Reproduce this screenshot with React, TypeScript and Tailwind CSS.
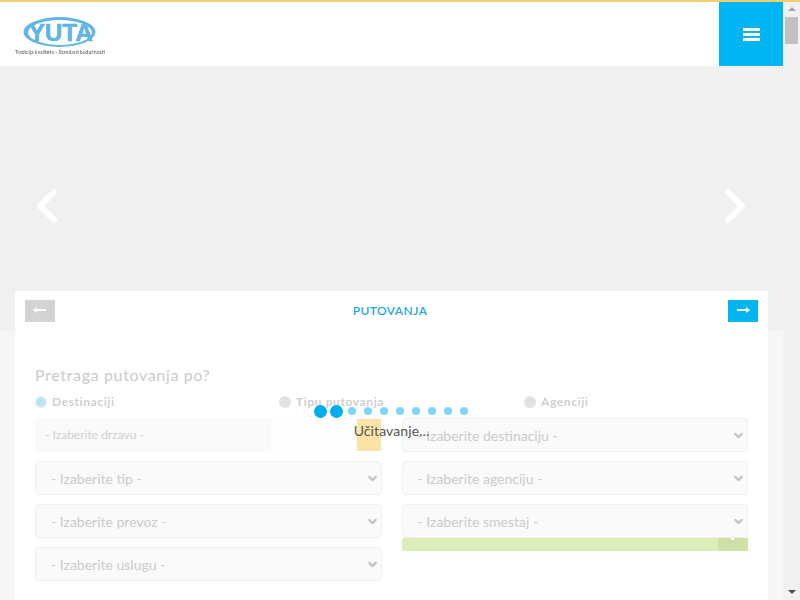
import { ChevronDown } from 'lucide-react';

const leftSelects = ['- Izaberite tip -', '- Izaberite prevoz -', '- Izaberite uslugu -'];

function FakeSelect({ label }: { label: string }) {
  return (
    <div className="h-[34px] flex items-center justify-between pl-[15px] pr-[2px] bg-[#fafafa] border border-[#f0f0f0] rounded-[4px] text-[14px] text-[#cbcbcb]">
      <span>{label}</span>
      <ChevronDown size={13} strokeWidth={4} className="text-[#c4c4c4]" />
    </div>
  );
}

function Radio({ label, active }: { label: string; active?: boolean }) {
  return (
    <div className="flex items-center gap-[5px] text-[12px] font-bold tracking-[0.6px] text-[#cfcfcf]">
      <span className={`w-[12px] h-[12px] rounded-full ${active ? 'bg-[#b5e4f4] border-2 border-[#dfe6e8]' : 'bg-[#e2e2e2]'}`} />
      <span>{label}</span>
    </div>
  );
}

function Logo() {
  return (
    <svg width="104" height="44" viewBox="0 0 104 44" className="blur-[0.3px]">
      <path
        fillRule="evenodd"
        d="M8.5 18 a36 15 0 1 0 72 0 a36 15 0 1 0 -72 0 Z M13 18.5 a32 12.5 0 1 0 64 0 a32 12.5 0 1 0 -64 0 Z"
        fill="#62b5e4"
      />
      <text
        x="14"
        y="27"
        fontFamily="Liberation Sans"
        fontWeight="700"
        fontSize="23"
        fill="#62b5e4"
        stroke="#62b5e4"
        strokeWidth="0.7"
        textLength="64"
        lengthAdjust="spacingAndGlyphs"
      >
        YUTA
      </text>
      <text x="0" y="39.5" fontFamily="Lato" fontSize="5.6" fill="#555" textLength="90" lengthAdjust="spacingAndGlyphs">
        Tradicija kvaliteta - Standard budućnosti
      </text>
    </svg>
  );
}

export default function App() {
  return (
    <div className="h-[600px] w-[800px] flex overflow-hidden font-['Lato',sans-serif] bg-[#f6f6f6]">
      <div className="relative w-[783px] h-full overflow-hidden">
        {/* Header */}
        <div className="h-[66px] bg-white flex items-start justify-between pl-[15px]">
          <div className="pt-[14px]">
            <Logo />
          </div>
          <div className="w-[64px] h-[64px] mt-[2px] bg-[#00b5f1] flex flex-col items-center justify-center gap-[2px]">
            <span className="w-[17px] h-[3px] bg-white" />
            <span className="w-[17px] h-[3px] bg-white" />
            <span className="w-[17px] h-[3px] bg-white" />
          </div>
        </div>

        {/* Hero */}
        <div className="h-[265px] bg-[#f0f0f0] flex justify-between items-start pt-[122px] pl-[35px] pr-[36px]">
          <svg width="24" height="36" viewBox="0 0 24 36" fill="none" stroke="white" strokeWidth="6" strokeLinecap="round" strokeLinejoin="round">
            <path d="M19 4 L5 18 L19 32" />
          </svg>
          <svg width="24" height="36" viewBox="0 0 24 36" fill="none" stroke="white" strokeWidth="6" strokeLinecap="round" strokeLinejoin="round">
            <path d="M5 4 L19 18 L5 32" />
          </svg>
        </div>

        {/* Search card */}
        <div className="absolute left-[15px] top-[291px] w-[753px] h-[309px] bg-white">
          <div className="flex items-center justify-between px-[10px] pt-[9px]">
            <div className="w-[30px] h-[22px] bg-[#d3d3d3] flex items-center justify-center pb-[3px]">
              <svg width="14" height="8" viewBox="0 0 14 8" fill="white"><path d="M4 1 L4 3 L13 3 L13 5 L4 5 L4 7 L0 4 Z" /></svg>
            </div>
            <span className="text-[12px] font-semibold tracking-[0.45px] text-[#1ea7df] pr-[3px]">PUTOVANJA</span>
            <div className="w-[30px] h-[22px] bg-[#00b5f1] flex items-center justify-center pb-[3px]">
              <svg width="14" height="8" viewBox="0 0 14 8" fill="white"><path d="M10 1 L10 3 L1 3 L1 5 L10 5 L10 7 L14 4 Z" /></svg>
            </div>
          </div>

          <div className="px-[20px] pt-[43px]">
            <h2 className="text-[16px] leading-[20px] tracking-[0.65px] text-[#c8cbce]">Pretraga putovanja po?</h2>
            <div className="grid grid-cols-[244px_245px_1fr] mt-[7px] h-[20px] items-center">
              <Radio label="Destinaciji" active />
              <Radio label="Tipu putovanja" />
              <Radio label="Agenciji" />
            </div>
            <div className="grid grid-cols-2 gap-x-[20px] gap-y-[9px] mt-[6px]">
              <div className="relative h-[34px] flex items-center pl-[10px] text-[12px] text-[#cfcfcf] bg-gradient-to-r from-[#fafafa] from-[68%] to-[#fefefe] to-[68%]">
                - Izaberite drzavu -
                <span className="absolute right-[1px] top-[1px] w-[24px] h-[32px] bg-[#fde3a7]" />
              </div>
              <FakeSelect label="- Izaberite destinaciju -" />
              <FakeSelect label={leftSelects[0]} />
              <FakeSelect label="- Izaberite agenciju -" />
              <FakeSelect label={leftSelects[1]} />
              <div className="relative">
                <FakeSelect label="- Izaberite smestaj -" />
                <div className="absolute left-0 right-0 top-full h-[13px] bg-[#dcedb9] flex justify-end">
                  <span className="relative w-[30px] h-full bg-[#cfe0a6]">
                    <span className="absolute left-[13px] top-0 w-[3px] h-[2px] bg-white" />
                  </span>
                </div>
              </div>
              <FakeSelect label={leftSelects[2]} />
            </div>
          </div>
        </div>

        {/* Loader overlay */}
        <div className="absolute inset-0 flex flex-col items-center pt-[404px] pointer-events-none">
          <div className="flex items-center h-[14px] pl-[1px]">
            {[0, 1].map((i) => (
              <span key={i} className="w-[16px] flex justify-center">
                <span className="w-[13px] h-[13px] rounded-full bg-[#00aeef]" />
              </span>
            ))}
            {[0, 1, 2, 3, 4, 5, 6, 7].map((i) => (
              <span key={i} className="w-[16px] flex justify-center">
                <span className="w-[8px] h-[8px] rounded-full bg-[#80d7f7]" />
              </span>
            ))}
          </div>
          <span className="text-[14px] leading-[20px] mt-[3px] tracking-[0.1px] text-[#555]">Učitavanje...</span>
        </div>
      </div>

      {/* Scrollbar */}
      <div className="w-[17px] h-full bg-[#f1f1f1] flex flex-col items-center">
        <div className="h-[17px] flex items-center justify-center">
          <span className="w-0 h-0 border-x-[4px] border-x-transparent border-b-[4px] border-b-[#a3a3a3]" />
        </div>
        <div className="w-[13px] h-[27px] bg-[#c1c1c1]" />
        <div className="flex-1" />
        <div className="h-[17px] flex items-center justify-center">
          <span className="w-0 h-0 border-x-[4px] border-x-transparent border-t-[4px] border-t-[#505050]" />
        </div>
      </div>

      {/* Top accent line */}
      <div className="fixed left-0 top-0 w-full h-[2px] bg-[#f0d06e]" />
    </div>
  );
}
